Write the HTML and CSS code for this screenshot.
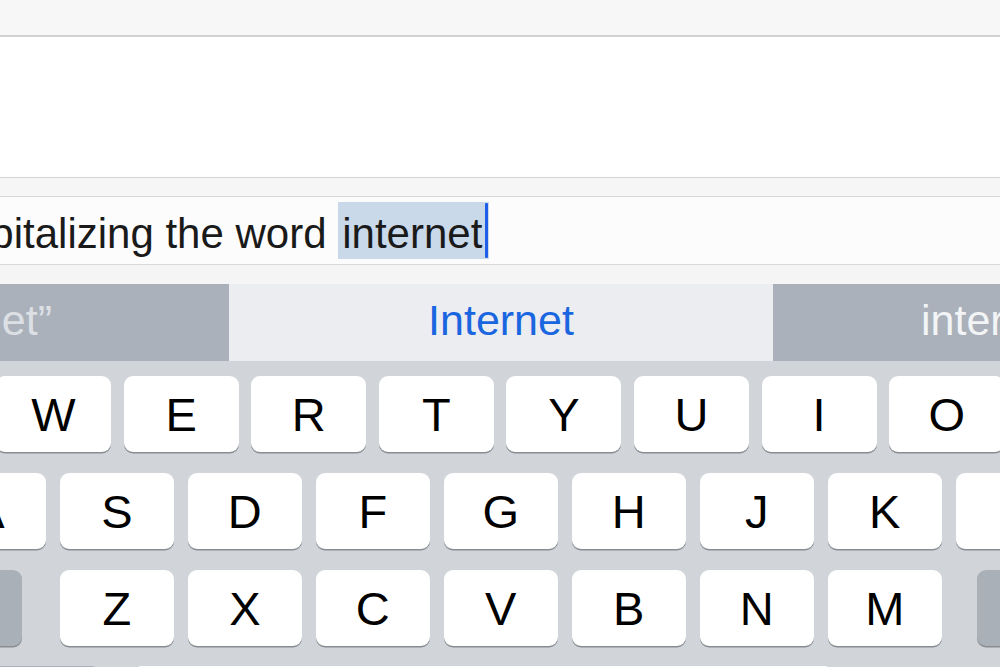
FILE: index.html
```html
<!DOCTYPE html>
<html lang="en">
<head>
<meta charset="utf-8">
<title>Keyboard autocorrect</title>
<link rel="stylesheet" href="styles.css">
</head>
<body>
<div class="screen">
  <div class="topbar"></div>
  <div class="content"></div>
  <div class="spacer"></div>
  <div class="field"><span class="field-text">capitalizing the word <span class="sel">internet</span></span></div>
  <div class="spacer2"></div>
  <div class="suggest">
    <div class="cell cell-left"><span>“internet”</span></div>
    <div class="cell cell-mid">Internet</div>
    <div class="cell cell-right">internets</div>
  </div>
  <div class="keyboard">
    <div class="row row1">
      <div class="key">Q</div><div class="key">W</div><div class="key">E</div><div class="key">R</div><div class="key">T</div><div class="key">Y</div><div class="key">U</div><div class="key">I</div><div class="key">O</div><div class="key">P</div>
    </div>
    <div class="row row2">
      <div class="key">A</div><div class="key">S</div><div class="key">D</div><div class="key">F</div><div class="key">G</div><div class="key">H</div><div class="key">J</div><div class="key">K</div><div class="key">L</div>
    </div>
    <div class="row row3">
      <div class="key fn shift"></div>
      <div class="letters">
        <div class="key">Z</div><div class="key">X</div><div class="key">C</div><div class="key">V</div><div class="key">B</div><div class="key">N</div><div class="key">M</div>
      </div>
      <div class="key fn back"></div>
    </div>
    <div class="row row4">
      <div class="key fn numkey"></div>
      <div class="key space"></div>
    </div>
  </div>
</div>
</body>
</html>
```

FILE: styles.css
```css
html, body {
  margin: 0;
  padding: 0;
}
body {
  width: 1000px;
  height: 667px;
  overflow: hidden;
  background: #ffffff;
  font-family: "Liberation Sans", Arial, sans-serif;
}
.screen {
  width: 1000px;
  height: 667px;
  overflow: hidden;
  display: flex;
  flex-direction: column;
}
.topbar {
  flex: none;
  height: 35px;
  background: #f7f7f7;
  border-bottom: 2px solid #d2d2d2;
}
.content {
  flex: none;
  height: 140px;
  background: #ffffff;
  border-bottom: 1px solid #d4d4d4;
}
.spacer {
  flex: none;
  height: 18px;
  background: #f6f6f6;
  border-bottom: 1px solid #d6d6d6;
}
.field {
  flex: none;
  box-sizing: border-box;
  height: 67px;
  padding-top: 3px;
  line-height: 67px;
  background: #fcfcfc;
  overflow: hidden;
  white-space: nowrap;
  font-size: 42px;
  color: #1a1a1a;
}
.field-text {
  margin-left: -54px;
}
.sel {
  background: #c9d9ea;
  padding: 8px 1px 2px 4px;
}
.sel::after {
  content: "";
  display: inline-block;
  width: 3px;
  height: 55px;
  margin-left: 3px;
  vertical-align: -10px;
  background: #1f5fe8;
  border-radius: 1px;
}
.spacer2 {
  flex: none;
  height: 19px;
  background: #f5f5f5;
  border-top: 1px solid #d9d9d9;
}
.suggest {
  flex: none;
  height: 77px;
  display: flex;
  font-size: 43px;
}
.cell {
  display: flex;
  align-items: center;
  box-sizing: border-box;
  padding-bottom: 5px;
  white-space: nowrap;
  overflow: hidden;
}
.cell-left {
  width: 229px;
  justify-content: flex-end;
  padding-right: 177px;
  background: #aab1ba;
  color: #dce0e5;
}
.cell-left span {
  flex: none;
}
.cell-mid {
  width: 544px;
  justify-content: center;
  background: #ebedf0;
  color: #1a66e0;
}
.cell-right {
  flex: 1;
  padding-left: 148px;
  background: #aab1ba;
  color: #f2f4f6;
}
.keyboard {
  flex: 1;
  background: #d1d5da;
  padding-top: 15px;
  display: flex;
  flex-direction: column;
  gap: 20.8px;
  overflow: hidden;
}
.row {
  display: flex;
  flex: none;
  height: 76px;
}
.key {
  flex: none;
  height: 76px;
  box-sizing: border-box;
  padding-top: 1px;
  background: #ffffff;
  border-radius: 9px;
  box-shadow: 0 1.5px 0 #898c91;
  display: flex;
  align-items: center;
  justify-content: center;
  font-size: 47px;
  color: #000000;
}
.row1 {
  margin-left: -131.6px;
  gap: 12.6px;
}
.row1 .key {
  width: 115px;
}
.row2 {
  margin-left: -68px;
  gap: 14.3px;
}
.row2 .key,
.letters .key {
  width: 113.7px;
}
.row3 {
  margin-left: -98px;
  gap: 38px;
}
.letters {
  display: flex;
  gap: 14.3px;
}
.fn {
  background: #aab0b8;
}
.shift {
  width: 120px;
}
.row3 .back {
  width: 120px;
  margin-left: -3px;
}
.row4 {
  margin-left: -100px;
  gap: 33px;
}
.numkey {
  width: 200px;
}
.space {
  width: 700px;
}
```
